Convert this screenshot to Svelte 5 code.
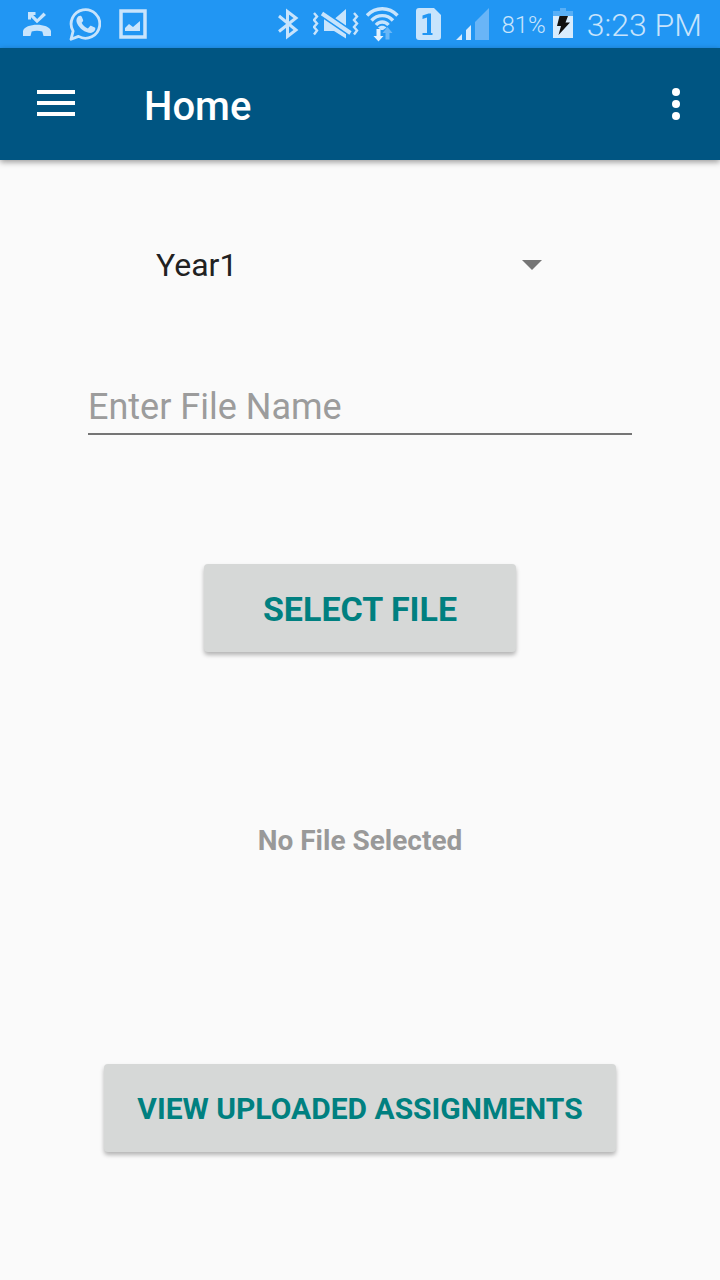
<script>
  let year = $state('Year1');
  let fileName = $state('');
</script>

<div class="screen">
  <div class="status">
    <div class="notices">
      <svg width="28" height="48" viewBox="23 0 28 48" fill="#c8e4fc">
        <path d="M28 12h7.500v3h-2.300l4 4 6.300-6.500 2.500 2.500L37 23.300l-6-6V19.500h-3z" />
        <path d="M23 36v-5c1-4 7.500-6.200 14-6.200s13 2.200 14 6.200v5h-7.500l-1.200-4.500c-3.300-1-7.300-1-10.600 0L30.500 36z" />
      </svg>
      <svg width="32" height="48" viewBox="69 0 32 48">
        <path d="M71 39.300l2.100-8.200A14.300 14.300 0 1 1 78.500 36.400z" fill="none" stroke="#c8e4fc" stroke-width="2.800" stroke-linejoin="round" />
        <path d="M78.300 16.300c1.400-1 3-.8 3.600.6l1.200 3c.3 1-.3 1.700-1.500 2.900 1.500 3 3.600 4.700 6.300 5.700l2-2.300c.5-.5 1-.5 1.600-.2l3.300 1.600c.7.400.6 1 .4 2-.7 2.600-4 3.800-6.600 3.200-5.800-1.300-10.600-6-12-10.700-.6-2.200.2-4.400 1.700-5.800z" fill="#c8e4fc" />
      </svg>
      <svg width="28" height="48" viewBox="119 0 28 48">
        <path d="M121 11h24v26h-24z" fill="none" stroke="#c8e4fc" stroke-width="3.500" />
        <path d="M125 31v-3l4-4 4 3 7-6v10z" fill="#c8e4fc" />
      </svg>
    </div>
    <div class="system">
      <svg width="28" height="48" viewBox="278 0 28 48">
        <path d="M279 16l17 14-8.500 6.500v-25L296 18l-17 13.500" fill="none" stroke="#c8e4fc" stroke-width="3" />
      </svg>
      <svg width="46" height="48" viewBox="313 0 46 48">
        <g fill="none" stroke="#c8e4fc" stroke-width="2.400">
          <path d="M314 13l3 3.500-3 3.500 3 3.500-3 3.500 3 3.500-3 4" />
          <path d="M354 13l3 3.500-3 3.500 3 3.500-3 3.500 3 3.500-3 4" />
        </g>
        <path d="M335 18.500l11-9.500v18zM324 19h6l16 12v7.500L334 31h-10z" fill="#c8e4fc" />
        <path d="M322 13.500L350.500 33" stroke="#2196f3" stroke-width="7" />
        <path d="M322 13.500L350.500 33" stroke="#c8e4fc" stroke-width="4" />
      </svg>
      <svg width="43" height="48" viewBox="366 0 43 48">
        <g fill="none" stroke="#c8e4fc" stroke-width="3.400">
          <path d="M367 15.500c8.500-9 22-9 30.500 0" />
          <path d="M371.500 20.500c6-6.500 15.500-6.500 21.500 0" />
          <path d="M376 25c3.500-4 9-4 12.500 0" />
        </g>
        <path d="M378 27.500c2.500-2.500 6-2.500 8.500 0L383 30h-2z" fill="#c8e4fc" />
        <path d="M376.500 29h4v7h3L378.500 41.500 373.500 36h3z" fill="#e4f2fe" />
        <path d="M385.500 39.500h4V33h3L387.500 27 382.500 33h3z" fill="#69b7f7" />
      </svg>
      <svg width="33" height="48" viewBox="416 0 33 48">
        <path d="M419 8h15l7 7v22a3 3 0 0 1-3 3h-19a3 3 0 0 1-3-3V11a3 3 0 0 1 3-3z" fill="#c8e4fc" />
        <path d="M422.500 15.500l6-2h2.500V33h1.500v2h-10v-2h4.500V17.500l-4.500 1.500z" fill="#2196f3" />
      </svg>
      <svg width="38" height="48" viewBox="456 0 38 48">
        <path d="M456 40l6-6v6zM466 40V30l5-5v15z" fill="#d5eafd" />
        <path d="M475 40V22L489 8v32z" fill="#69b5f7" />
      </svg>
      <span class="charge">81%</span>
      <svg width="27" height="48" viewBox="552 0 27 48">
        <path d="M552 11h7V8h6v3h7v5h-20z" fill="#58aff6" />
        <path d="M552 16h20v22h-20z" fill="#d8ecfd" />
        <path d="M558.500 16h8.500l-2.500 6.500h4.500L557.500 35l2.500-9h-4z" fill="#111" />
      </svg>
      <span class="clock">3:23 PM</span>
    </div>
  </div>

  <header>
    <button class="icon" aria-label="Open menu">
      <svg width="38" height="28" viewBox="0 0 38 28" fill="#fff">
        <path d="M0 0h38v4H0zM0 11h38v4H0zM0 22h38v4H0z" />
      </svg>
    </button>
    <h1>Home</h1>
    <button class="icon" aria-label="More options">
      <svg width="8" height="32" viewBox="0 0 8 32" fill="#fff">
        <circle cx="4" cy="4" r="4" /><circle cx="4" cy="16" r="4" /><circle cx="4" cy="28" r="4" />
      </svg>
    </button>
  </header>

  <main>
    <div class="spinner">
      <select bind:value={year} aria-label="Year">
        <option>Year1</option>
        <option>Year2</option>
        <option>Year3</option>
        <option>Year4</option>
      </select>
      <svg width="20" height="10" viewBox="0 0 20 10"><path d="M0 0h20L10 10z" fill="#757575" /></svg>
    </div>
    <input type="text" placeholder="Enter File Name" aria-label="File name" bind:value={fileName} />
    <button class="raised select">SELECT FILE</button>
    <p>No File Selected</p>
    <button class="raised view">VIEW UPLOADED ASSIGNMENTS</button>
  </main>
</div>

<style>
  :global(body) {
    margin: 0;
    background: #fafafa;
  }
  .screen {
    min-height: 100vh;
    background: #fafafa;
    font-family: Roboto, sans-serif;
  }
  svg {
    display: block;
    flex: none;
  }
  button {
    border: 0;
    font-family: inherit;
    cursor: pointer;
  }
  .status {
    display: flex;
    justify-content: space-between;
    height: 48px;
    padding: 0 18px 0 23px;
    background: #2196f3;
    color: #c8e4fc;
    font-weight: 300;
    white-space: nowrap;
  }
  .notices,
  .system {
    display: flex;
    align-items: center;
  }
  .notices {
    gap: 18px;
  }
  .system {
    gap: 7px;
  }
  .charge {
    font-size: 24px;
    line-height: 48px;
    padding-top: 2px;
  }
  .clock {
    font-size: 32px;
    line-height: 48px;
    padding-top: 2px;
  }
  header {
    position: relative;
    display: flex;
    align-items: center;
    height: 112px;
    padding: 0 27px 0 24px;
    background: #005582;
    box-shadow: 0 2px 6px rgba(0, 0, 0, 0.4);
  }
  .icon {
    display: flex;
    padding: 13px;
    background: none;
  }
  h1 {
    flex: 1;
    margin: 0;
    padding: 6px 0 0 56px;
    color: #fff;
    font-size: 40px;
    font-weight: 500;
    line-height: 48px;
  }
  main {
    display: flex;
    flex-direction: column;
    align-items: center;
    padding: 81px 88px 0;
  }
  .spinner {
    display: grid;
    align-items: center;
    align-self: stretch;
    margin: 0 76px 0 52px;
  }
  .spinner > * {
    grid-area: 1 / 1;
  }
  .spinner svg {
    justify-self: end;
    margin-right: 14px;
    pointer-events: none;
  }
  select {
    width: 100%;
    height: 48px;
    padding: 0 48px 0 16px;
    border: 0;
    appearance: none;
    background: none;
    color: #212121;
    font: 32px Roboto, sans-serif;
  }
  input {
    width: 100%;
    height: 56px;
    box-sizing: border-box;
    margin-top: 90px;
    padding: 2px 0 0;
    border: 0;
    border-bottom: 2px solid #757575;
    border-radius: 0;
    background: none;
    color: #212121;
    font: 36px Roboto, sans-serif;
    outline: 0;
  }
  input::placeholder {
    color: #9c9c9c;
    opacity: 1;
  }
  .raised {
    height: 88px;
    padding: 0;
    border-radius: 4px;
    background: #d6d8d7;
    color: #008080;
    font-weight: 700;
    white-space: nowrap;
    box-shadow: 0 3px 4px rgba(0, 0, 0, 0.28);
  }
  .select {
    width: 312px;
    margin-top: 129px;
    padding-top: 2px;
    font-size: 34px;
  }
  p {
    margin: 173px 0 0;
    color: #999;
    font-size: 28px;
    font-weight: 700;
    line-height: 32px;
  }
  .view {
    width: 512px;
    margin-top: 207px;
    font-size: 30px;
  }
</style>
